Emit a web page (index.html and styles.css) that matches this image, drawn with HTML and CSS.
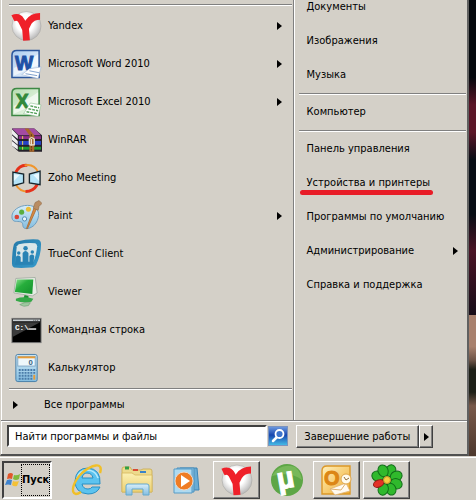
FILE: index.html
```html
<!DOCTYPE html>
<html lang="ru">
<head>
    <meta charset="UTF-8">
    <meta name="viewport" content="width=device-width, initial-scale=1.0">
    <title>Меню Пуск</title>
    <link rel="stylesheet" href="styles.css">
</head>
<body>
    <svg class="defs" aria-hidden="true">
        <defs>
            <radialGradient id="ball" cx="45%" cy="40%" r="60%">
                <stop offset="0.5" stop-color="#ffffff"/>
                <stop offset="1" stop-color="#b9b9b9"/>
            </radialGradient>
            <linearGradient id="wordBg" x1="0" y1="0" x2="1" y2="1">
                <stop offset="0" stop-color="#a9cbef"/>
                <stop offset="1" stop-color="#f4f9ff"/>
            </linearGradient>
            <linearGradient id="excelBg" x1="0" y1="0" x2="1" y2="1">
                <stop offset="0" stop-color="#b4dcae"/>
                <stop offset="1" stop-color="#f4fbf1"/>
            </linearGradient>
            <linearGradient id="sky" x1="0" y1="0" x2="0" y2="1">
                <stop offset="0" stop-color="#d8eef9"/>
                <stop offset="1" stop-color="#83bde0"/>
            </linearGradient>
            <linearGradient id="conf" x1="0" y1="0" x2="1" y2="1">
                <stop offset="0" stop-color="#2579a8"/>
                <stop offset="1" stop-color="#369bcc"/>
            </linearGradient>
            <linearGradient id="screen" x1="0" y1="0" x2="1" y2="1">
                <stop offset="0" stop-color="#8be08d"/>
                <stop offset="0.4" stop-color="#27ae3c"/>
                <stop offset="1" stop-color="#13902c"/>
            </linearGradient>
            <linearGradient id="folder" x1="0" y1="0" x2="0" y2="1">
                <stop offset="0" stop-color="#fbf0b4"/>
                <stop offset="1" stop-color="#ecd072"/>
            </linearGradient>
            <linearGradient id="gold" x1="0" y1="0" x2="1" y2="1">
                <stop offset="0" stop-color="#fff0bd"/>
                <stop offset="1" stop-color="#f0ad2e"/>
            </linearGradient>
            <linearGradient id="lens" x1="0" y1="0" x2="0" y2="1">
                <stop offset="0" stop-color="#6f9ce2"/>
                <stop offset="0.45" stop-color="#1746ae"/>
                <stop offset="1" stop-color="#46bfe8"/>
            </linearGradient>
            <symbol id="yandex" viewBox="0 0 32 32">
                <circle cx="16" cy="16" r="15" fill="url(#ball)" stroke="#aaa9a5" stroke-width="0.6"/>
                <path d="M2 8 Q8 5 11 11 L15 19 L16 31 M30 6 Q22 6 18 12 L14 20" fill="none" stroke="#ef2029" stroke-width="7"/>
            </symbol>
        </defs>
    </svg>

    <main class="desktop">
        <div class="start-menu">
            <div class="panes">
                <nav class="programs">
                    <hr>
                    <ul>
                        <li><a href="#" class="program more">
                            <svg class="icon"><use href="#yandex"/></svg>
                            Yandex
                        </a></li>
                        <li><a href="#" class="program more">
                            <svg class="icon" viewBox="0 0 32 32">
                                <path d="M6 2 H29 V30 H1 V7 Q1 2 6 2Z" fill="url(#wordBg)" stroke="#2b569c" stroke-width="1.6"/>
                                <path d="M3 20 Q15 15 28 6 V17 L3 28Z" fill="#fff" opacity="0.6"/>
                                <text x="4" y="22" class="office-letter" fill="#1f51a5" stroke="#1f51a5">W</text>
                                <path d="M19 21 L31 19 L28 31 L11 27Z" fill="#fff" stroke="#9cb4d6" stroke-width="0.6"/>
                                <path d="M19 23 L29 25 M15 26 L27 28" stroke="#7fa0cc"/>
                            </svg>
                            Microsoft Word 2010
                        </a></li>
                        <li><a href="#" class="program more">
                            <svg class="icon" viewBox="0 0 32 32">
                                <path d="M6 2 H29 V30 H1 V7 Q1 2 6 2Z" fill="url(#excelBg)" stroke="#3d8844" stroke-width="1.6"/>
                                <path d="M3 20 Q15 15 28 6 V17 L3 28Z" fill="#fff" opacity="0.6"/>
                                <text x="5" y="22" class="office-letter" fill="#33893b" stroke="#33893b">X</text>
                                <path d="M20 17 L31 19 L28 31 L13 28Z" fill="#fff" stroke="#8fbe90" stroke-width="0.6"/>
                                <path d="M20 20 L29 22 M18 23 L28 25 M16 26 L27 28" stroke="#55a05a" stroke-width="1.5" stroke-dasharray="3 1"/>
                            </svg>
                            Microsoft Excel 2010
                        </a></li>
                        <li><a href="#" class="program">
                            <svg class="icon" viewBox="0 0 32 32">
                                <path d="M1 4 H24 L32 11 V28 H8 L1 22Z" fill="#24202a"/>
                                <path d="M1 4 H24 L31 11 H8Z" fill="#a34ba2"/>
                                <path d="M1 5 L7 11 V15 L1 10Z M1 11 L7 17 V21 L1 16Z M1 17 L7 22 V26 L1 22Z" fill="#eee"/>
                                <path d="M8 12 H31 V15 H8Z" fill="#8b2b8a"/>
                                <path d="M8 17 H31 V21 H8Z" fill="#2643c4"/>
                                <path d="M8 23 H31 V26 H8Z" fill="#1d9a31"/>
                                <path d="M12 12 V15 M12 17 V21 M12 23 V26" stroke="#e8d44c"/>
                                <path d="M14 4 H18 L24 11 V28 H19 V11Z" fill="#a9682a"/>
                                <path d="M21 10 V28" stroke="#5b3512" stroke-dasharray="2 1"/>
                                <path d="M19 21 V15 Q21 12 24 15 V21 H19 M21 15 V22" fill="none" stroke="#e8e2d0" stroke-width="1.4"/>
                            </svg>
                            WinRAR
                        </a></li>
                        <li><a href="#" class="program">
                            <svg class="icon" viewBox="0 0 32 32">
                                <path d="M5 10 Q9 2 17 3" fill="none" stroke="#e5311b" stroke-width="3"/>
                                <path d="M14 3 Q24 1 28 10" fill="none" stroke="#f0952b" stroke-width="2"/>
                                <path d="M5 23 Q9 30 17 30" fill="none" stroke="#f0952b" stroke-width="2"/>
                                <path d="M15 30 Q23 30 27 23" fill="none" stroke="#e5311b" stroke-width="3"/>
                                <path d="M2 10 L13 12 V21 L2 24Z M30 9 L19 12 V21 L30 23Z" fill="#b5e4f8" stroke="#16242c" stroke-width="1.4"/>
                                <path d="M3 12 L9 13 L3 19Z M29 11 L23 13 L29 19Z" fill="#e9f9ff"/>
                            </svg>
                            Zoho Meeting
                        </a></li>
                        <li><a href="#" class="program more">
                            <svg class="icon" viewBox="0 0 32 32">
                                <path d="M1 18 C0 10 9 5 17 5 C26 5 30 11 28 18 C26 26 20 29 16 29 C10 29 14 23 10 22 C6 21 2 23 1 18Z" fill="url(#sky)" stroke="#6d9dbe"/>
                                <circle cx="6" cy="17" r="2.4" fill="#d94538"/>
                                <circle cx="11" cy="12" r="2.6" fill="#5aae3f"/>
                                <circle cx="18" cy="9" r="2.6" fill="#edbd36"/>
                                <circle cx="14" cy="19" r="2.2" fill="#ecf6fb" stroke="#4d87b1"/>
                                <path d="M27 7 L17 29 L16 29 L24 7Z" fill="#d98a43" stroke="#a6662d" stroke-width="0.8"/>
                                <path d="M23 8 Q24 4 25 2 L29 0 L32 3 L29 6 L28 10Z" fill="#b98c62" stroke="#8d6845" stroke-width="0.6"/>
                            </svg>
                            Paint
                        </a></li>
                        <li><a href="#" class="program">
                            <svg class="icon" viewBox="0 0 32 32">
                                <path d="M6 3 Q18 0 28 1 Q31 2 31 6 Q31 17 26 27 Q24 30 20 30 Q10 31 3 30 Q1 29 1 26 Q1 13 3 6 Q4 4 6 3Z" fill="url(#conf)"/>
                                <path d="M8 6 Q17 4 25 5 Q27 6 27 8 Q26 18 23 24 L5 26 Q5 15 6 8Z" fill="#d9e6e8"/>
                                <path d="M4 27 L5 19 Q7 16 10 19 V24 H12 V15 Q15 11 18 15 V24 H19 V18 Q22 15 24 18 L23 27Z" fill="#2983b4"/>
                                <circle cx="8" cy="15" r="1.8" fill="#2983b4"/>
                                <circle cx="15" cy="10" r="2.3" fill="#2983b4"/>
                                <circle cx="22" cy="14" r="1.8" fill="#2983b4"/>
                            </svg>
                            TrueConf Client
                        </a></li>
                        <li><a href="#" class="program">
                            <svg class="icon" viewBox="0 0 32 32">
                                <path d="M5 2 L25 1 L27 17 L22 20 L3 17Z" fill="#e6ece4" stroke="#9ba79b" stroke-width="0.8"/>
                                <path d="M6 3 L23 3 L22 18 L4 16Z" fill="url(#screen)"/>
                                <path d="M14 19 L18 20 L18 26 L12 26Z" fill="#1c8e31"/>
                                <path d="M5 23 Q13 20 23 23 L21 26 Q12 28 5 25Z" fill="#35a847"/>
                                <path d="M9 29 Q14 26 20 27 L18 30 Q13 32 9 29Z" fill="#9fc9a0" stroke="#6e9a70" stroke-width="0.6"/>
                            </svg>
                            Viewer
                        </a></li>
                        <li><a href="#" class="program">
                            <svg class="icon" viewBox="0 0 32 32">
                                <rect x="1" y="4" width="30" height="25" fill="#000" stroke="#747474"/>
                                <path d="M2 5 H30 V7 H2Z" fill="#c9ced2"/>
                                <path d="M23 6 H29" stroke="#555" stroke-dasharray="1 1"/>
                                <path d="M2 8 H30 L2 23Z" fill="#3b3b3b"/>
                                <text x="4" y="16" class="prompt">C:\</text>
                                <path d="M18 15 H26" stroke="#fff" stroke-width="1.4"/>
                            </svg>
                            Командная строка
                        </a></li>
                        <li><a href="#" class="program">
                            <svg class="icon" viewBox="0 0 32 32">
                                <rect x="5" y="2" width="22" height="28" rx="2" fill="url(#sky)" stroke="#477fa9"/>
                                <rect x="7" y="4" width="18" height="10" fill="#eef7fb" stroke="#80a8c5"/>
                                <path d="M7 5 H25" stroke="#e79b36" stroke-width="2"/>
                                <text x="18" y="13" class="digit">0</text>
                                <path d="M8 18 H22 M8 21 H22 M8 24 H22 M8 27 H22" stroke="#4a7ba8" stroke-width="2" stroke-dasharray="2 1"/>
                                <path d="M24 17 V22" stroke="#4a7ba8" stroke-width="2" stroke-dasharray="2 1"/>
                                <path d="M24 23 V28" stroke="#e79b36" stroke-width="2"/>
                            </svg>
                            Калькулятор
                        </a></li>
                    </ul>
                    <hr>
                    <a href="#" class="all-programs">Все программы</a>
                </nav>

                <nav class="places">
                    <a href="#">Документы</a>
                    <a href="#">Изображения</a>
                    <a href="#">Музыка</a>
                    <hr>
                    <a href="#">Компьютер</a>
                    <hr>
                    <a href="#">Панель управления</a>
                    <a href="#" class="marked">Устройства и принтеры</a>
                    <a href="#">Программы по умолчанию</a>
                    <a href="#" class="more">Администрирование</a>
                    <a href="#">Справка и поддержка</a>
                </nav>
            </div>

            <div class="menu-footer">
                <form class="search">
                    <input type="text" value="Найти программы и файлы" aria-label="Найти программы и файлы">
                    <button type="button" class="search-btn" aria-label="Поиск">
                        <svg viewBox="0 0 20 20">
                            <rect x="0.5" y="0.5" width="19" height="19" fill="url(#lens)" stroke="#7c93bd"/>
                            <path d="M9 11 L5 15" stroke="#fff" stroke-width="2.5" stroke-linecap="round"/>
                            <circle cx="11.5" cy="8" r="4" fill="#3d74cc" stroke="#fff" stroke-width="1.8"/>
                        </svg>
                    </button>
                </form>
                <div class="shutdown">
                    <button type="button" class="raised">Завершение работы</button>
                    <button type="button" class="raised arrow" aria-label="Другие варианты"></button>
                </div>
            </div>
        </div>
    </main>

    <footer class="taskbar">
        <button type="button" class="start">
            <svg viewBox="0 0 16 16">
                <path d="M3 2 Q6 0 8 2 L7 7 Q5 6 2 7Z" fill="#e2572b"/>
                <path d="M9 3 Q12 4 15 2 L14 7 Q11 9 8 7Z" fill="#80b93c"/>
                <path d="M2 8 Q5 7 7 8 L6 13 Q3 12 0 13Z" fill="#3f83ce"/>
                <path d="M8 9 Q11 10 14 9 L12 14 Q9 15 7 13Z" fill="#f4c136"/>
            </svg>
            <span>Пуск</span>
        </button>
        <button type="button" class="task" aria-label="Internet Explorer">
            <svg viewBox="0 0 32 32">
                <path d="M29 20 H11 Q12 25 17 25 Q20 25 21 23 H29 Q26 30 17 30 Q4 29 4 17 Q5 4 17 4 Q30 5 29 20Z M11 14 H22 Q21 9 16 9 Q12 9 11 14Z" fill="#5cc3ef" fill-rule="evenodd" stroke="#278fc4"/>
                <path d="M6 14 Q8 6 17 6 Q25 7 27 14" fill="none" stroke="#b5e9fc" stroke-width="1.5"/>
                <path d="M29 9 C33 -3 20 1 11 9 C2 18 -1 29 5 30 Q7 30 10 28" fill="none" stroke="#f0bf29" stroke-width="2.4"/>
            </svg>
        </button>
        <button type="button" class="task" aria-label="Проводник">
            <svg viewBox="0 0 32 32">
                <path d="M1 5 Q1 3 3 3 H9 L11 6 H20 L22 5 H29 Q31 5 31 7 V28 H1Z" fill="#edda8d" stroke="#c9a94c" stroke-width="0.8"/>
                <path d="M4 4 H8" stroke="#30a045" stroke-width="3"/>
                <path d="M12 6 H17" stroke="#d84a35" stroke-width="2"/>
                <path d="M19 8 H25" stroke="#3984c9" stroke-width="2"/>
                <path d="M1 9 H11 L14 11 H31 V28 H1Z" fill="url(#folder)" stroke="#d7b75c" stroke-width="0.8"/>
                <path d="M5 31 V22 Q5 20 7 20 H26 Q28 20 28 22 V31 H22 V25 H11 V31Z" fill="url(#sky)" stroke="#65a9ce"/>
            </svg>
        </button>
        <button type="button" class="task" aria-label="Проигрыватель">
            <svg viewBox="0 0 32 32">
                <path d="M9 4 H26 L28 26 H10Z" fill="#69acd5" stroke="#3d85b5"/>
                <path d="M6 4 H23 V28 H6Z" fill="#89c1e2" stroke="#4c91bd"/>
                <path d="M3 5 H21 V29 H3Z" fill="#aedaf0" stroke="#569bc6"/>
                <circle cx="13" cy="17" r="9" fill="#ef7c24" stroke="#eed7c6"/>
                <path d="M10 11 L19 17 L10 23Z" fill="#fff"/>
            </svg>
        </button>
        <button type="button" class="task raised" aria-label="Yandex">
            <svg><use href="#yandex"/></svg>
        </button>
        <button type="button" class="task" aria-label="uTorrent">
            <svg viewBox="0 0 32 32">
                <circle cx="16" cy="16" r="16" fill="#5da646"/>
                <path d="M1 12 Q9 -2 24 3 Q30 8 31 16 Q20 7 1 12Z" fill="#91c96e" opacity="0.5"/>
                <text x="6" y="24" class="mu" transform="rotate(-10 16 16)">µ</text>
            </svg>
        </button>
        <button type="button" class="task raised" aria-label="Outlook">
            <svg viewBox="0 0 32 32">
                <path d="M6 2 H29 V30 H1 V7 Q1 2 6 2Z" fill="url(#gold)" stroke="#dc9827" stroke-width="1.4"/>
                <text x="3" y="21" class="office-letter" fill="#dc8615" stroke="#dc8615">O</text>
                <path d="M9 25 L25 19 L29 27 L14 31Z" fill="#fffaf0" stroke="#deb273" stroke-width="0.8"/>
                <path d="M9 25 L20 26 L25 19" fill="none" stroke="#deb273"/>
                <circle cx="25" cy="15" r="5" fill="#fffbed" stroke="#dfa64a"/>
                <path d="M23 13 L25 16 L28 14" fill="none" stroke="#8f6c39"/>
            </svg>
        </button>
        <button type="button" class="task raised" aria-label="ICQ">
            <svg viewBox="0 0 32 32">
                <g fill="#30b92c" stroke="#126e19">
                    <ellipse cx="16" cy="6" rx="5" ry="6" transform="rotate(22 16 16)"/>
                    <ellipse cx="16" cy="6" rx="5" ry="6" transform="rotate(67 16 16)"/>
                    <ellipse cx="16" cy="6" rx="5" ry="6" transform="rotate(112 16 16)"/>
                    <ellipse cx="16" cy="6" rx="5" ry="6" transform="rotate(157 16 16)"/>
                    <ellipse cx="16" cy="6" rx="5" ry="6" transform="rotate(202 16 16)"/>
                    <ellipse cx="16" cy="6" rx="5" ry="6" transform="rotate(292 16 16)"/>
                    <ellipse cx="16" cy="6" rx="5" ry="6" transform="rotate(337 16 16)"/>
                </g>
                <ellipse cx="16" cy="7" rx="3.5" ry="5.5" transform="rotate(247 16 16)" fill="#e33126" stroke="#8e1d17"/>
                <circle cx="16" cy="16" r="3.5" fill="#f8ce42" stroke="#b69220"/>
            </svg>
        </button>
    </footer>
</body>
</html>
```

FILE: styles.css
```css
* {
    box-sizing: border-box;
}

body {
    margin: 0;
    height: 100vh;
    display: flex;
    flex-direction: column;
    overflow: hidden;
    background-color: #d4d0c8;
    color: #000;
    font-family: Tahoma, "DejaVu Sans Condensed", sans-serif;
    font-size: 11px;
    line-height: 16px;
}

a {
    color: inherit;
    text-decoration: none;
}

button,
input {
    font: inherit;
    color: inherit;
    border-radius: 0;
}

hr {
    width: 100%;
    height: 2px;
    margin: 0;
    border: 0;
    border-top: 1px solid #808080;
    border-bottom: 1px solid #fff;
}

.defs {
    position: absolute;
    width: 0;
    height: 0;
}

.desktop {
    flex: 1;
    min-height: 0;
    display: flex;
    padding-right: 7px;
    background: linear-gradient(#05080d 0 17%, #5a1628 23% 29%, #080d15 35% 47%, #4a1426 55%, #170d18 69%, #a8816e 69% 76%, #6d5448 79%, #1e2018 81% 86%, #78594a 89%, #4d382d);
}

/* Start menu */
.start-menu {
    flex: 1;
    display: flex;
    flex-direction: column;
    overflow: hidden;
    background-color: #d4d0c8;
    border: solid;
    border-width: 0 2px 2px 1px;
    border-color: #404040 #606060 #505050 #d4d0c8;
    box-shadow: inset 1px 0 #fff;
}

.panes {
    flex: 1;
    min-height: 0;
    display: flex;
    border-bottom: 1px solid #808080;
}

.programs {
    flex: 292;
    padding: 4px 1px 0 8px;
    border-right: 1px solid #808080;
}

.programs ul {
    margin: 0;
    padding: 1px 0;
    list-style: none;
}

.program {
    display: flex;
    align-items: center;
    gap: 6px;
    height: 38px;
    padding: 0 10px 0 2px;
}

.icon {
    width: 31px;
    height: 32px;
}

.more::after,
.all-programs::before,
.arrow::before {
    content: "";
    border: 4px solid transparent;
    border-left: 5px solid #000;
    border-right: 0;
}

.more::after {
    margin-left: auto;
}

.all-programs {
    display: flex;
    align-items: center;
    gap: 26px;
    height: 30px;
    padding-left: 4px;
}

.places {
    flex: 173;
    display: flex;
    flex-direction: column;
    margin-top: -10px;
    padding: 0 1px 0 4px;
    border-left: 1px solid #fff;
}

.places a {
    display: flex;
    align-items: center;
    height: 34px;
    padding: 0 8px;
    white-space: nowrap;
}

.places hr {
    margin: 1px 0 0;
}

.marked {
    position: relative;
}

/* Red marker line under the item */
.marked::after {
    content: "";
    position: absolute;
    left: 1px;
    bottom: 5px;
    width: 133px;
    height: 5px;
    border-radius: 3px;
    background-color: #e81c27;
}

.menu-footer {
    display: flex;
    align-items: flex-start;
    gap: 8px;
    height: 33px;
    padding: 3px 34px 0 6px;
    border-top: 1px solid #fff;
}

.search {
    flex: 282;
    display: flex;
    gap: 1px;
}

.search input {
    flex: 1;
    min-width: 0;
    height: 22px;
    padding: 0 6px;
    border: 2px solid;
    border-color: #404040 #fff #fff #404040;
    background-color: #fff;
}

.search-btn {
    width: 20px;
    height: 22px;
    padding: 1px 0;
    border: 0;
    background: none;
}

.search-btn svg {
    display: block;
    width: 20px;
    height: 20px;
}

.raised {
    border: 1px solid;
    border-color: #fff #404040 #404040 #fff;
    background-color: #d4d0c8;
    box-shadow: inset -1px -1px #808080;
}

.shutdown {
    flex: 138;
    display: flex;
    height: 23px;
}

.shutdown .raised {
    flex: 1;
    padding: 0;
    white-space: nowrap;
}

.shutdown .arrow {
    flex: 0 0 14px;
    display: flex;
    align-items: center;
    justify-content: center;
}

/* Taskbar */
.taskbar {
    display: flex;
    gap: 3px;
    height: 44px;
    padding: 4px 2px 1px;
    border-top: 1px solid #d4d0c8;
    box-shadow: inset 0 1px #fff;
}

.start {
    display: flex;
    align-items: center;
    width: 50px;
    margin-right: 8px;
    padding: 1px 0 1px 1px;
    border: 2px solid;
    border-color: #404040 #fff #fff #404040;
    background-color: #d4d0c8;
    font-weight: bold;
}

.start svg {
    flex: none;
    width: 16px;
    height: 16px;
}

.start span {
    flex: 1;
    min-width: 0;
    align-self: stretch;
    display: flex;
    align-items: center;
    border: 1px dotted #000;
}

.task {
    display: flex;
    align-items: center;
    justify-content: center;
    width: 47px;
    padding: 0;
}

.task:not(.raised) {
    border: 0;
    background: none;
}

.task svg {
    width: 32px;
    height: 32px;
    overflow: visible;
}

/* Lettering inside the icons */
.office-letter {
    font: bold 20px "Liberation Sans", sans-serif;
}

.prompt {
    font: bold 8px "Liberation Mono", monospace;
    fill: #fff;
}

.digit {
    font: bold 8px "Liberation Sans", sans-serif;
    fill: #35617f;
}

.mu {
    font: bold 30px "Liberation Sans", sans-serif;
    fill: #fff;
    stroke: #fff;
}
```
